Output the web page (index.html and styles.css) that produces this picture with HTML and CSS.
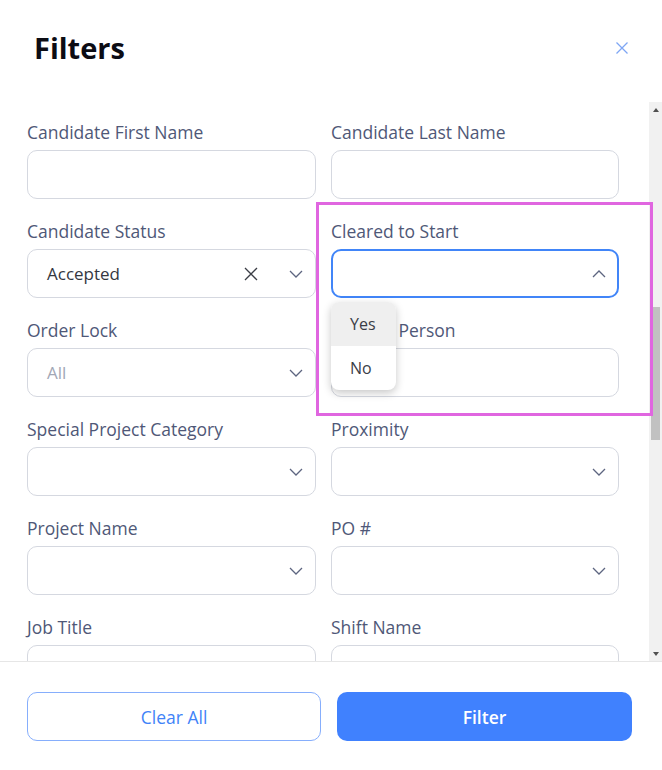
FILE: index.html
```html
<!DOCTYPE html>
<html lang="en">
<head>
<meta charset="utf-8">
<title>Filters</title>
<link rel="stylesheet" href="styles.css">
</head>
<body>
<div class="modal">
  <header class="modal-header">
    <h1 class="title">Filters</h1>
    <button class="close" aria-label="Close">
      <svg width="14" height="14" viewBox="0 0 14 14"><path d="M1.5 1.5 L12.5 12.5 M12.5 1.5 L1.5 12.5" stroke="#7ea6f4" stroke-width="1.3" fill="none"/></svg>
    </button>
  </header>

  <div class="modal-body">
    <div class="scroll-content">
      <div class="grid">
        <div class="field">
          <label class="label">Candidate First Name</label>
          <div class="input"></div>
        </div>
        <div class="field">
          <label class="label">Candidate Last Name</label>
          <div class="input"></div>
        </div>

        <div class="field">
          <label class="label">Candidate Status</label>
          <div class="input select">
            <span class="value">Accepted</span>
            <svg class="clear-x" width="14" height="14" viewBox="0 0 14 14"><path d="M1 1 L13 13 M13 1 L1 13" stroke="#3a3d45" stroke-width="1.3" fill="none"/></svg>
            <svg class="chev" width="14" height="8" viewBox="0 0 14 8"><path d="M1 1 L7 7 L13 1" stroke="#5d6580" stroke-width="1.3" fill="none"/></svg>
          </div>
        </div>
        <div class="field field-open">
          <label class="label">Cleared to Start</label>
          <div class="input select focused">
            <span class="value"></span>
            <svg class="chev" width="14" height="8" viewBox="0 0 14 8"><path d="M1 7 L7 1 L13 7" stroke="#5d6580" stroke-width="1.3" fill="none"/></svg>
          </div>
          <ul class="menu">
            <li class="menu-item active">Yes</li>
            <li class="menu-item">No</li>
          </ul>
        </div>

        <div class="field">
          <label class="label">Order Lock</label>
          <div class="input select">
            <span class="value placeholder">All</span>
            <svg class="chev" width="14" height="8" viewBox="0 0 14 8"><path d="M1 1 L7 7 L13 1" stroke="#5d6580" stroke-width="1.3" fill="none"/></svg>
          </div>
        </div>
        <div class="field">
          <label class="label">Contact Person</label>
          <div class="input"></div>
        </div>

        <div class="field">
          <label class="label">Special Project Category</label>
          <div class="input select">
            <span class="value"></span>
            <svg class="chev" width="14" height="8" viewBox="0 0 14 8"><path d="M1 1 L7 7 L13 1" stroke="#5d6580" stroke-width="1.3" fill="none"/></svg>
          </div>
        </div>
        <div class="field">
          <label class="label">Proximity</label>
          <div class="input select">
            <span class="value"></span>
            <svg class="chev" width="14" height="8" viewBox="0 0 14 8"><path d="M1 1 L7 7 L13 1" stroke="#5d6580" stroke-width="1.3" fill="none"/></svg>
          </div>
        </div>

        <div class="field">
          <label class="label">Project Name</label>
          <div class="input select">
            <span class="value"></span>
            <svg class="chev" width="14" height="8" viewBox="0 0 14 8"><path d="M1 1 L7 7 L13 1" stroke="#5d6580" stroke-width="1.3" fill="none"/></svg>
          </div>
        </div>
        <div class="field">
          <label class="label">PO #</label>
          <div class="input select">
            <span class="value"></span>
            <svg class="chev" width="14" height="8" viewBox="0 0 14 8"><path d="M1 1 L7 7 L13 1" stroke="#5d6580" stroke-width="1.3" fill="none"/></svg>
          </div>
        </div>

        <div class="field">
          <label class="label">Job Title</label>
          <div class="input"></div>
        </div>
        <div class="field">
          <label class="label">Shift Name</label>
          <div class="input"></div>
        </div>
      </div>
    </div>

    <div class="scrollbar">
      <div class="sb-btn"><span class="tri-up"></span></div>
      <div class="sb-track"><div class="sb-thumb"></div></div>
      <div class="sb-btn"><span class="tri-down"></span></div>
    </div>
  </div>

  <footer class="modal-footer">
    <button class="btn btn-outline">Clear All</button>
    <button class="btn btn-primary">Filter</button>
  </footer>

  <div class="highlight"></div>
</div>
</body>
</html>
```

FILE: styles.css
```css
* { box-sizing: border-box; }

html, body {
  margin: 0;
  padding: 0;
  background: #ffffff;
}

body {
  font-family: "Open Sans", "Noto Sans", "Liberation Sans", sans-serif;
  width: 662px;
  height: 770px;
  overflow: hidden;
}

.modal {
  position: relative;
  width: 662px;
  height: 770px;
  display: flex;
  flex-direction: column;
}

.modal-header {
  height: 102px;
  display: flex;
  align-items: flex-start;
  justify-content: space-between;
  padding: 27px 34px 0 34px;
}

.title {
  margin: 0;
  font-size: 29px;
  line-height: 42px;
  font-weight: 700;
  color: #0c0c14;
}

.close {
  margin-top: 14px;
  margin-right: -1px;
  padding: 0;
  border: none;
  background: none;
  width: 14px;
  height: 14px;
  display: flex;
}

.modal-body {
  height: 559px;
  display: flex;
  overflow: hidden;
}

.scroll-content {
  flex: 1;
  padding: 18px 30px 0 27px;
  overflow: hidden;
}

.grid {
  display: grid;
  grid-template-columns: 289px 288px;
  column-gap: 15px;
  row-gap: 20px;
}

.field {
  display: flex;
  flex-direction: column;
}

.field-open {
  position: relative;
}

.label {
  font-size: 17.5px;
  line-height: 24px;
  height: 24px;
  color: #4f5877;
  margin-bottom: 6px;
  white-space: nowrap;
}

.input {
  height: 49px;
  border: 1px solid #d5d8e0;
  border-radius: 10px;
  background: #fff;
  display: flex;
  align-items: center;
  padding: 0 12px 0 19px;
}

.input.focused {
  border: 2px solid #4185f8;
  padding: 0 11px 0 18px;
}

.value {
  flex: 1;
  font-size: 17px;
  color: #34373f;
}

.value.placeholder {
  color: #a2a7b6;
}

.clear-x {
  margin-right: 31px;
}

.chev {
  display: block;
}

.menu {
  position: absolute;
  left: 0;
  top: 83px;
  width: 65px;
  margin: 0;
  padding: 0;
  list-style: none;
  background: #fff;
  border-radius: 8px;
  box-shadow: 0 3px 9px rgba(0, 0, 0, 0.22);
  overflow: hidden;
  z-index: 5;
}

.menu-item {
  height: 44px;
  line-height: 44px;
  padding-left: 19px;
  font-size: 16px;
  color: #3a3d47;
}

.menu-item.active {
  background: #efefef;
}

.scrollbar {
  width: 13px;
  background: #f1f1f1;
  display: flex;
  flex-direction: column;
}

.sb-btn {
  height: 15px;
  display: flex;
  align-items: center;
  justify-content: center;
}

.tri-up {
  width: 0;
  height: 0;
  border-left: 3.5px solid transparent;
  border-right: 3.5px solid transparent;
  border-bottom: 4px solid #505050;
}

.tri-down {
  width: 0;
  height: 0;
  border-left: 3.5px solid transparent;
  border-right: 3.5px solid transparent;
  border-top: 4px solid #505050;
}

.sb-track {
  flex: 1;
  padding: 0 2px;
}

.sb-thumb {
  margin-top: 190px;
  height: 133px;
  background: #c1c1c1;
}

.modal-footer {
  flex: 1;
  border-top: 1px solid #e6e6e6;
  display: flex;
  gap: 16px;
  padding: 30px 30px 0 27px;
}

.btn {
  height: 49px;
  border-radius: 10px;
  font-family: inherit;
  font-size: 17.5px;
  cursor: pointer;
}

.btn-outline {
  width: 294px;
  background: #fff;
  border: 1px solid #86aefc;
  color: #4183f8;
}

.btn-primary {
  flex: 1;
  background: #4081fe;
  border: none;
  color: #fff;
  font-weight: 600;
}

.highlight {
  position: absolute;
  left: 316px;
  top: 202px;
  width: 337px;
  height: 214px;
  border: 3px solid #e066e0;
  pointer-events: none;
  z-index: 10;
}
```
